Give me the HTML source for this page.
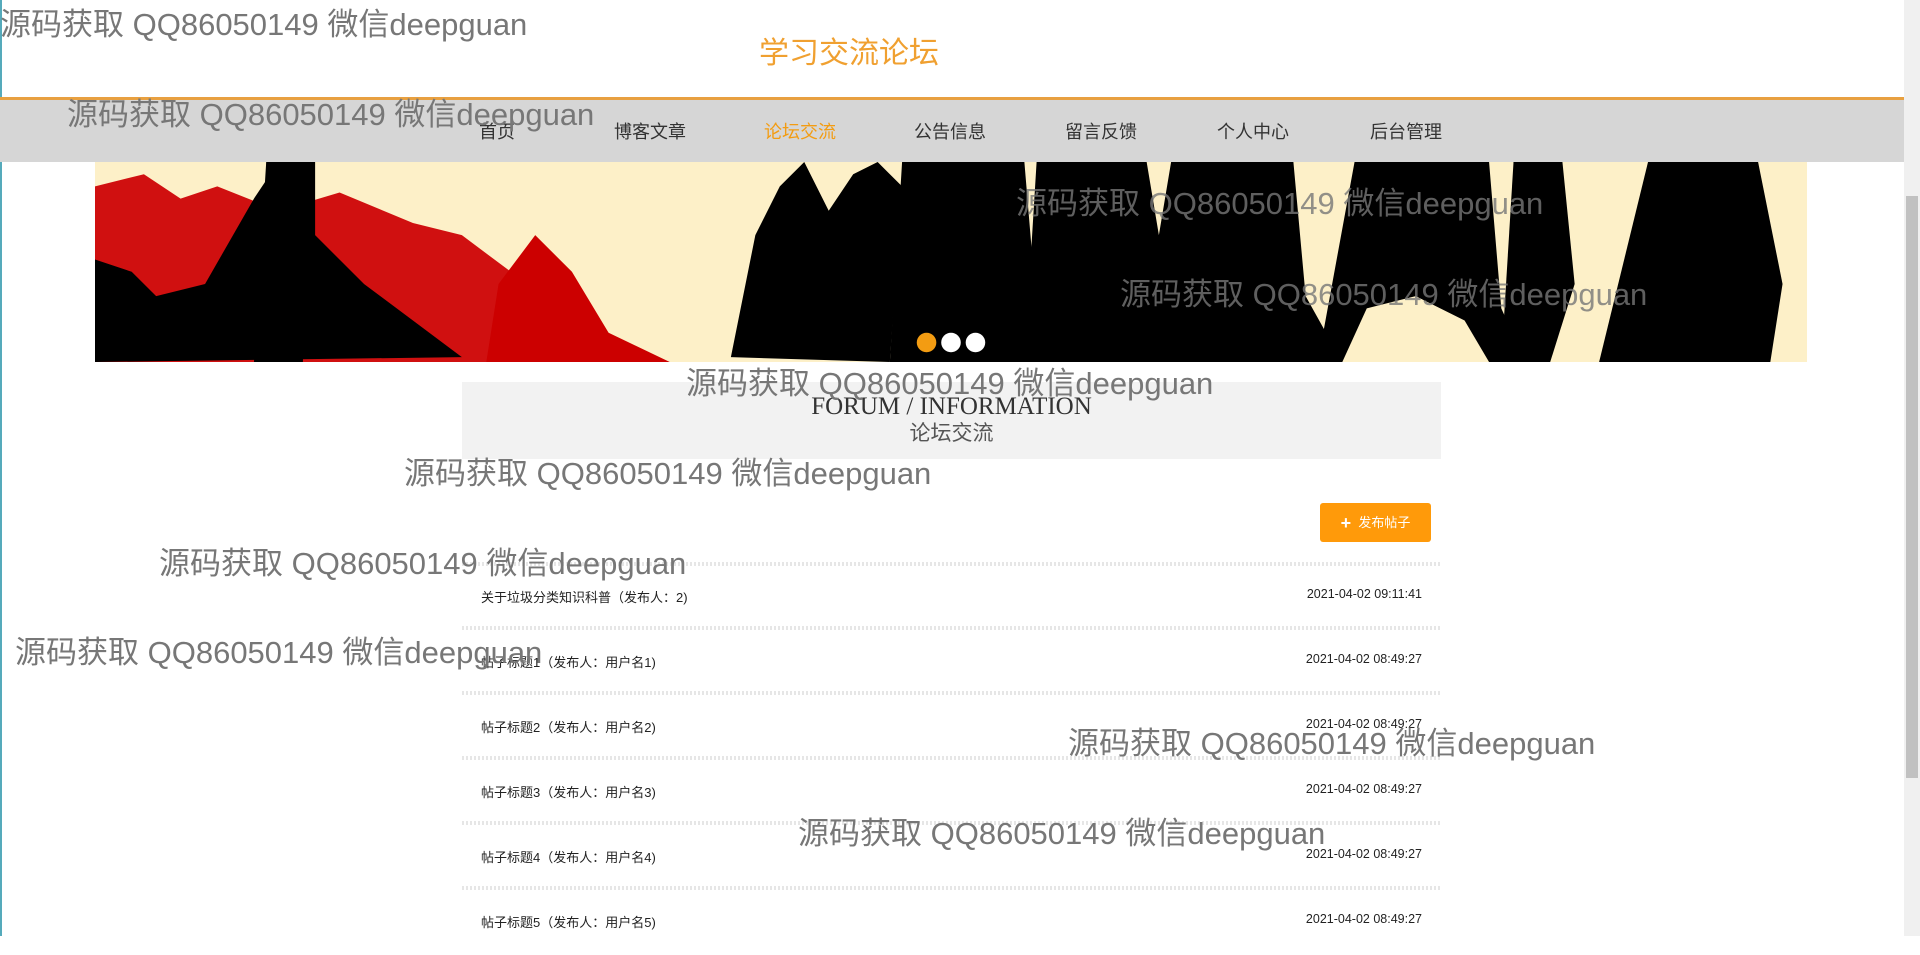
<!DOCTYPE html>
<html><head><meta charset="utf-8"><style>
*{margin:0;padding:0;box-sizing:border-box}
body{width:1920px;height:936px;overflow:hidden;background:#fff;font-family:"Liberation Sans","Noto Sans CJK SC",sans-serif;position:relative}
.abs{position:absolute}
.wm{position:absolute;font-size:31px;color:#777;white-space:nowrap;z-index:20;font-family:"Liberation Sans","Noto Sans CJK SC",sans-serif}
.nav{position:absolute;top:100px;left:0;width:1904px;height:62px;background:#d6d6d6}
.nav span{position:absolute;top:18px;font-size:18px;color:#333;transform:translateX(-50%)}
.row{position:absolute;left:462px;width:979px;height:65px;font-size:13px;color:#222}
.row .l{position:absolute;left:19px;top:22px}
.row .r{position:absolute;right:19px;top:22px;font-size:12.5px}
.dash{position:absolute;left:462px;width:979px;height:4px;background:repeating-linear-gradient(90deg,#e6e6e6 0 2px,#fff 2px 4px)}
</style></head><body>
<div class="abs" style="left:0;top:0;width:2px;height:936px;background:#5ab"></div>
<div class="abs" style="left:759px;top:28px;font-size:30px;color:#f0a030">学习交流论坛</div>
<div class="abs" style="left:0;top:97px;width:1904px;height:3px;background:#e8a040"></div>
<div class="nav">
<span style="left:497px">首页</span><span style="left:650px">博客文章</span><span style="left:800px;color:#f39c12">论坛交流</span><span style="left:950px">公告信息</span><span style="left:1101px">留言反馈</span><span style="left:1253px">个人中心</span><span style="left:1406px">后台管理</span>
</div>
<svg class="abs" style="left:95px;top:162px" width="1712" height="200" viewBox="0 0 1400 164" preserveAspectRatio="none">
<rect width="1400" height="164" fill="#fdf0c8"/>
<path d="M0 20 L40 10 L70 30 L100 20 L150 40 L200 25 L260 50 L300 60 L340 90 L370 100 L390 130 L400 164 L0 164Z" fill="#d01010"/>
<path d="M0 80 L30 90 L50 110 L90 100 L130 30 L150 0 L180 0 L180 60 L220 100 L260 130 L300 160 L0 164Z" fill="#000"/>
<path d="M140 0 L175 0 L170 164 L130 164Z" fill="#000"/>
<path d="M330 100 L360 60 L390 90 L420 140 L470 164 L320 164Z" fill="#c00"/>
<path d="M520 160 L540 60 L560 20 L580 0 L600 40 L620 10 L640 0 L660 20 L650 164Z" fill="#000"/>
<path d="M650 164 L660 0 L760 0 L770 120 L800 164Z" fill="#000"/>
<path d="M770 0 L860 0 L870 60 L880 0 L980 0 L990 110 L1020 164 L760 164Z" fill="#000"/>
<path d="M1000 164 L1030 0 L1140 0 L1150 120 L1170 164Z" fill="#000"/>
<path d="M1160 0 L1200 0 L1210 100 L1190 164 L1150 164Z" fill="#000"/>
<path d="M1230 164 L1270 0 L1360 0 L1380 100 L1370 164Z" fill="#000"/>
<path d="M1040 120 L1080 110 L1120 130 L1140 164 L1020 164Z" fill="#fdf0c8"/>
<circle cx="680" cy="148" r="8" fill="#f39c12"/><circle cx="700" cy="148" r="8" fill="#fff"/><circle cx="720" cy="148" r="8" fill="#fff"/>
</svg>
<div class="abs" style="left:1904px;top:0;width:16px;height:936px;background:#f0f0f0"></div>
<div class="abs" style="left:1906px;top:196px;width:12px;height:582px;background:#c1c1c1"></div>
<div class="abs" style="left:462px;top:382px;width:979px;height:77px;background:#f2f2f2;text-align:center">
<div style="font-family:'Liberation Serif',serif;font-size:25px;color:#333;margin-top:11px;line-height:28px">FORUM / INFORMATION</div>
<div style="font-size:21px;color:#555;line-height:26px">论坛交流</div>
</div>
<div class="abs" style="left:1320px;top:503px;width:111px;height:39px;background:#ff9a0a;border-radius:3px;color:#fff;font-size:13px;line-height:39px;text-align:center"><b style="font-size:18px;vertical-align:-2px">+</b>&nbsp; 发布帖子</div>
<div class="dash" style="top:562px"></div>
<div class="row" style="top:565px"><span class="l">关于垃圾分类知识科普（发布人：2)</span><span class="r">2021-04-02 09:11:41</span></div>
<div class="dash" style="top:626px"></div>
<div class="row" style="top:630px"><span class="l">帖子标题1（发布人：用户名1)</span><span class="r">2021-04-02 08:49:27</span></div>
<div class="dash" style="top:691px"></div>
<div class="row" style="top:695px"><span class="l">帖子标题2（发布人：用户名2)</span><span class="r">2021-04-02 08:49:27</span></div>
<div class="dash" style="top:756px"></div>
<div class="row" style="top:760px"><span class="l">帖子标题3（发布人：用户名3)</span><span class="r">2021-04-02 08:49:27</span></div>
<div class="dash" style="top:821px"></div>
<div class="row" style="top:825px"><span class="l">帖子标题4（发布人：用户名4)</span><span class="r">2021-04-02 08:49:27</span></div>
<div class="dash" style="top:886px"></div>
<div class="row" style="top:890px"><span class="l">帖子标题5（发布人：用户名5)</span><span class="r">2021-04-02 08:49:27</span></div>
<div class="wm" style="left:0;top:-1px">源码获取 QQ86050149 微信deepguan</div>
<div class="wm" style="left:67px;top:89px">源码获取 QQ86050149 微信deepguan</div>
<div class="wm" style="left:1016px;top:178px;opacity:.8">源码获取 QQ86050149 微信deepguan</div>
<div class="wm" style="left:1120px;top:269px;opacity:.8">源码获取 QQ86050149 微信deepguan</div>
<div class="wm" style="left:686px;top:358px">源码获取 QQ86050149 微信deepguan</div>
<div class="wm" style="left:404px;top:448px">源码获取 QQ86050149 微信deepguan</div>
<div class="wm" style="left:159px;top:538px">源码获取 QQ86050149 微信deepguan</div>
<div class="wm" style="left:15px;top:627px">源码获取 QQ86050149 微信deepguan</div>
<div class="wm" style="left:1068px;top:718px">源码获取 QQ86050149 微信deepguan</div>
<div class="wm" style="left:798px;top:808px">源码获取 QQ86050149 微信deepguan</div>
</body></html>
